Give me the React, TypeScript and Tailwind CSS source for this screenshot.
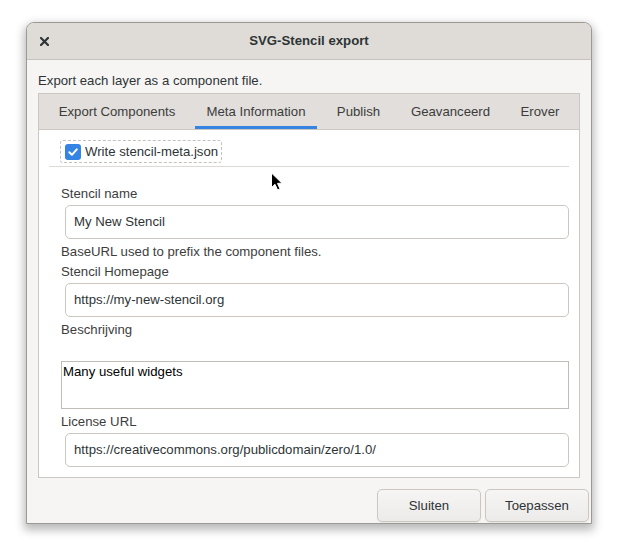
const tabs = [
  { label: "Export Components", width: "w-[140px]" },
  { label: "Meta Information", width: "w-[122px]", active: true },
  { label: "Publish", width: "w-[67px]" },
  { label: "Geavanceerd", width: "w-[101px]" },
  { label: "Erover", width: "w-[62px]" },
];

function TextEntry({ value }: { value: string }) {
  return (
    <div className="ml-[16px] mt-[3px] h-[34px] rounded-[5px] border border-[#cdc7c2] bg-white pl-[8px] flex items-center text-[#2e3436]">
      {value}
    </div>
  );
}

function Label({ children, mt = "mt-[5px]" }: { children: React.ReactNode; mt?: string }) {
  return <div className={`ml-[12px] ${mt} leading-[16px] text-[#3d3d3d]`}>{children}</div>;
}

function Cursor() {
  return (
    <svg className="absolute left-[270px] top-[172px]" width="14" height="20" viewBox="0 0 14 20">
      <path
        d="M1.5 1 L1.5 15.5 L5 12.3 L7.6 18 L10 16.9 L7.5 11.4 L12 11.2 Z"
        fill="#000"
        stroke="#fff"
        strokeWidth="1"
        strokeLinejoin="round"
      />
    </svg>
  );
}

export default function App() {
  return (
    <div
      className="relative w-[618px] h-[553px] bg-white pt-[22px] pl-[26px] text-[13.2px] text-[#2e3436]"
      style={{ fontFamily: '"Liberation Sans", Arial, sans-serif' }}
    >
      <div className="w-[566px] h-[502px] rounded-t-[8px] border border-[#9c9893] bg-[#f6f5f4] shadow-[0_4px_10px_2px_rgba(0,0,0,0.28)] flex flex-col overflow-hidden">
        {/* title bar */}
        <div className="relative h-[37px] shrink-0 bg-[#dfdcd8] border-b border-[#c6c2bd] flex items-center justify-center">
          <svg className="absolute left-[13px] top-[14px]" width="9" height="9" viewBox="0 0 9 9">
            <path d="M1 1 L8 8 M8 1 L1 8" stroke="#2e3436" strokeWidth="2.2" strokeLinecap="square" />
          </svg>
          <span className="font-bold text-[#2e3436]">SVG-Stencil export</span>
        </div>

        {/* body */}
        <div className="flex flex-col px-[11px] pt-[13px]">
          <div className="leading-[16px] text-[#2e3436]">Export each layer as a component file.</div>

          {/* notebook */}
          <div className="mt-[4px] h-[385px] border border-[#cdc7c2] flex flex-col">
            <div className="h-[36px] shrink-0 bg-[#e1dedb] border-b border-[#cdc7c2] flex pl-[8px] gap-[8px]">
              {tabs.map((t) => (
                <div
                  key={t.label}
                  className={`${t.width} h-full flex items-center justify-center text-[#3c3c3c] ${
                    t.active ? "border-b-[3px] border-[#3584e4] pt-[3px]" : ""
                  }`}
                >
                  {t.label}
                </div>
              ))}
            </div>

            <div className="flex-1 bg-white px-[10px] pt-[10px] flex flex-col">
              <div className="ml-[11px] w-[162px] h-[23px] rounded-[3px] border border-dashed border-[#c4c0bb] flex items-center pl-[4px] gap-[4px]">
                <div className="w-[16px] h-[16px] rounded-[3px] bg-[#3584e4] flex items-center justify-center">
                  <svg width="12" height="12" viewBox="0 0 12 12">
                    <path d="M2.3 6.2 L4.9 8.8 L9.8 3.4" fill="none" stroke="#fff" strokeWidth="2" strokeLinecap="round" strokeLinejoin="round" />
                  </svg>
                </div>
                <span className="text-[#2e3436]">Write stencil-meta.json</span>
              </div>

              <div className="mt-[3px] h-px bg-[#dcd9d6]" />

              <Label mt="mt-[19px]">Stencil name</Label>
              <TextEntry value="My New Stencil" />

              <Label>BaseURL used to prefix the component files.</Label>
              <Label mt="mt-[4px]">Stencil Homepage</Label>
              <TextEntry value="https://my-new-stencil.org" />

              <Label>Beschrijving</Label>
              <div className="ml-[12px] mt-[23px] h-[48px] border border-[#c0bcb8] bg-white pl-[1px] pt-[2px] leading-[16px] text-black">
                Many useful widgets
              </div>

              <Label>License URL</Label>
              <TextEntry value="https://creativecommons.org/publicdomain/zero/1.0/" />
            </div>
          </div>
        </div>

        {/* action buttons */}
        <div className="mt-[11px] flex justify-end gap-[4px] pr-[2px]">
          {["Sluiten", "Toepassen"].map((b) => (
            <button
              key={b}
              className="w-[104px] h-[33px] rounded-[5px] border border-[#cdc7c2] bg-gradient-to-b from-[#f6f5f4] to-[#edebe9] shadow-[0_1px_1px_rgba(0,0,0,0.06)] text-[#2e3436]"
            >
              {b}
            </button>
          ))}
        </div>
      </div>

      <Cursor />
    </div>
  );
}
